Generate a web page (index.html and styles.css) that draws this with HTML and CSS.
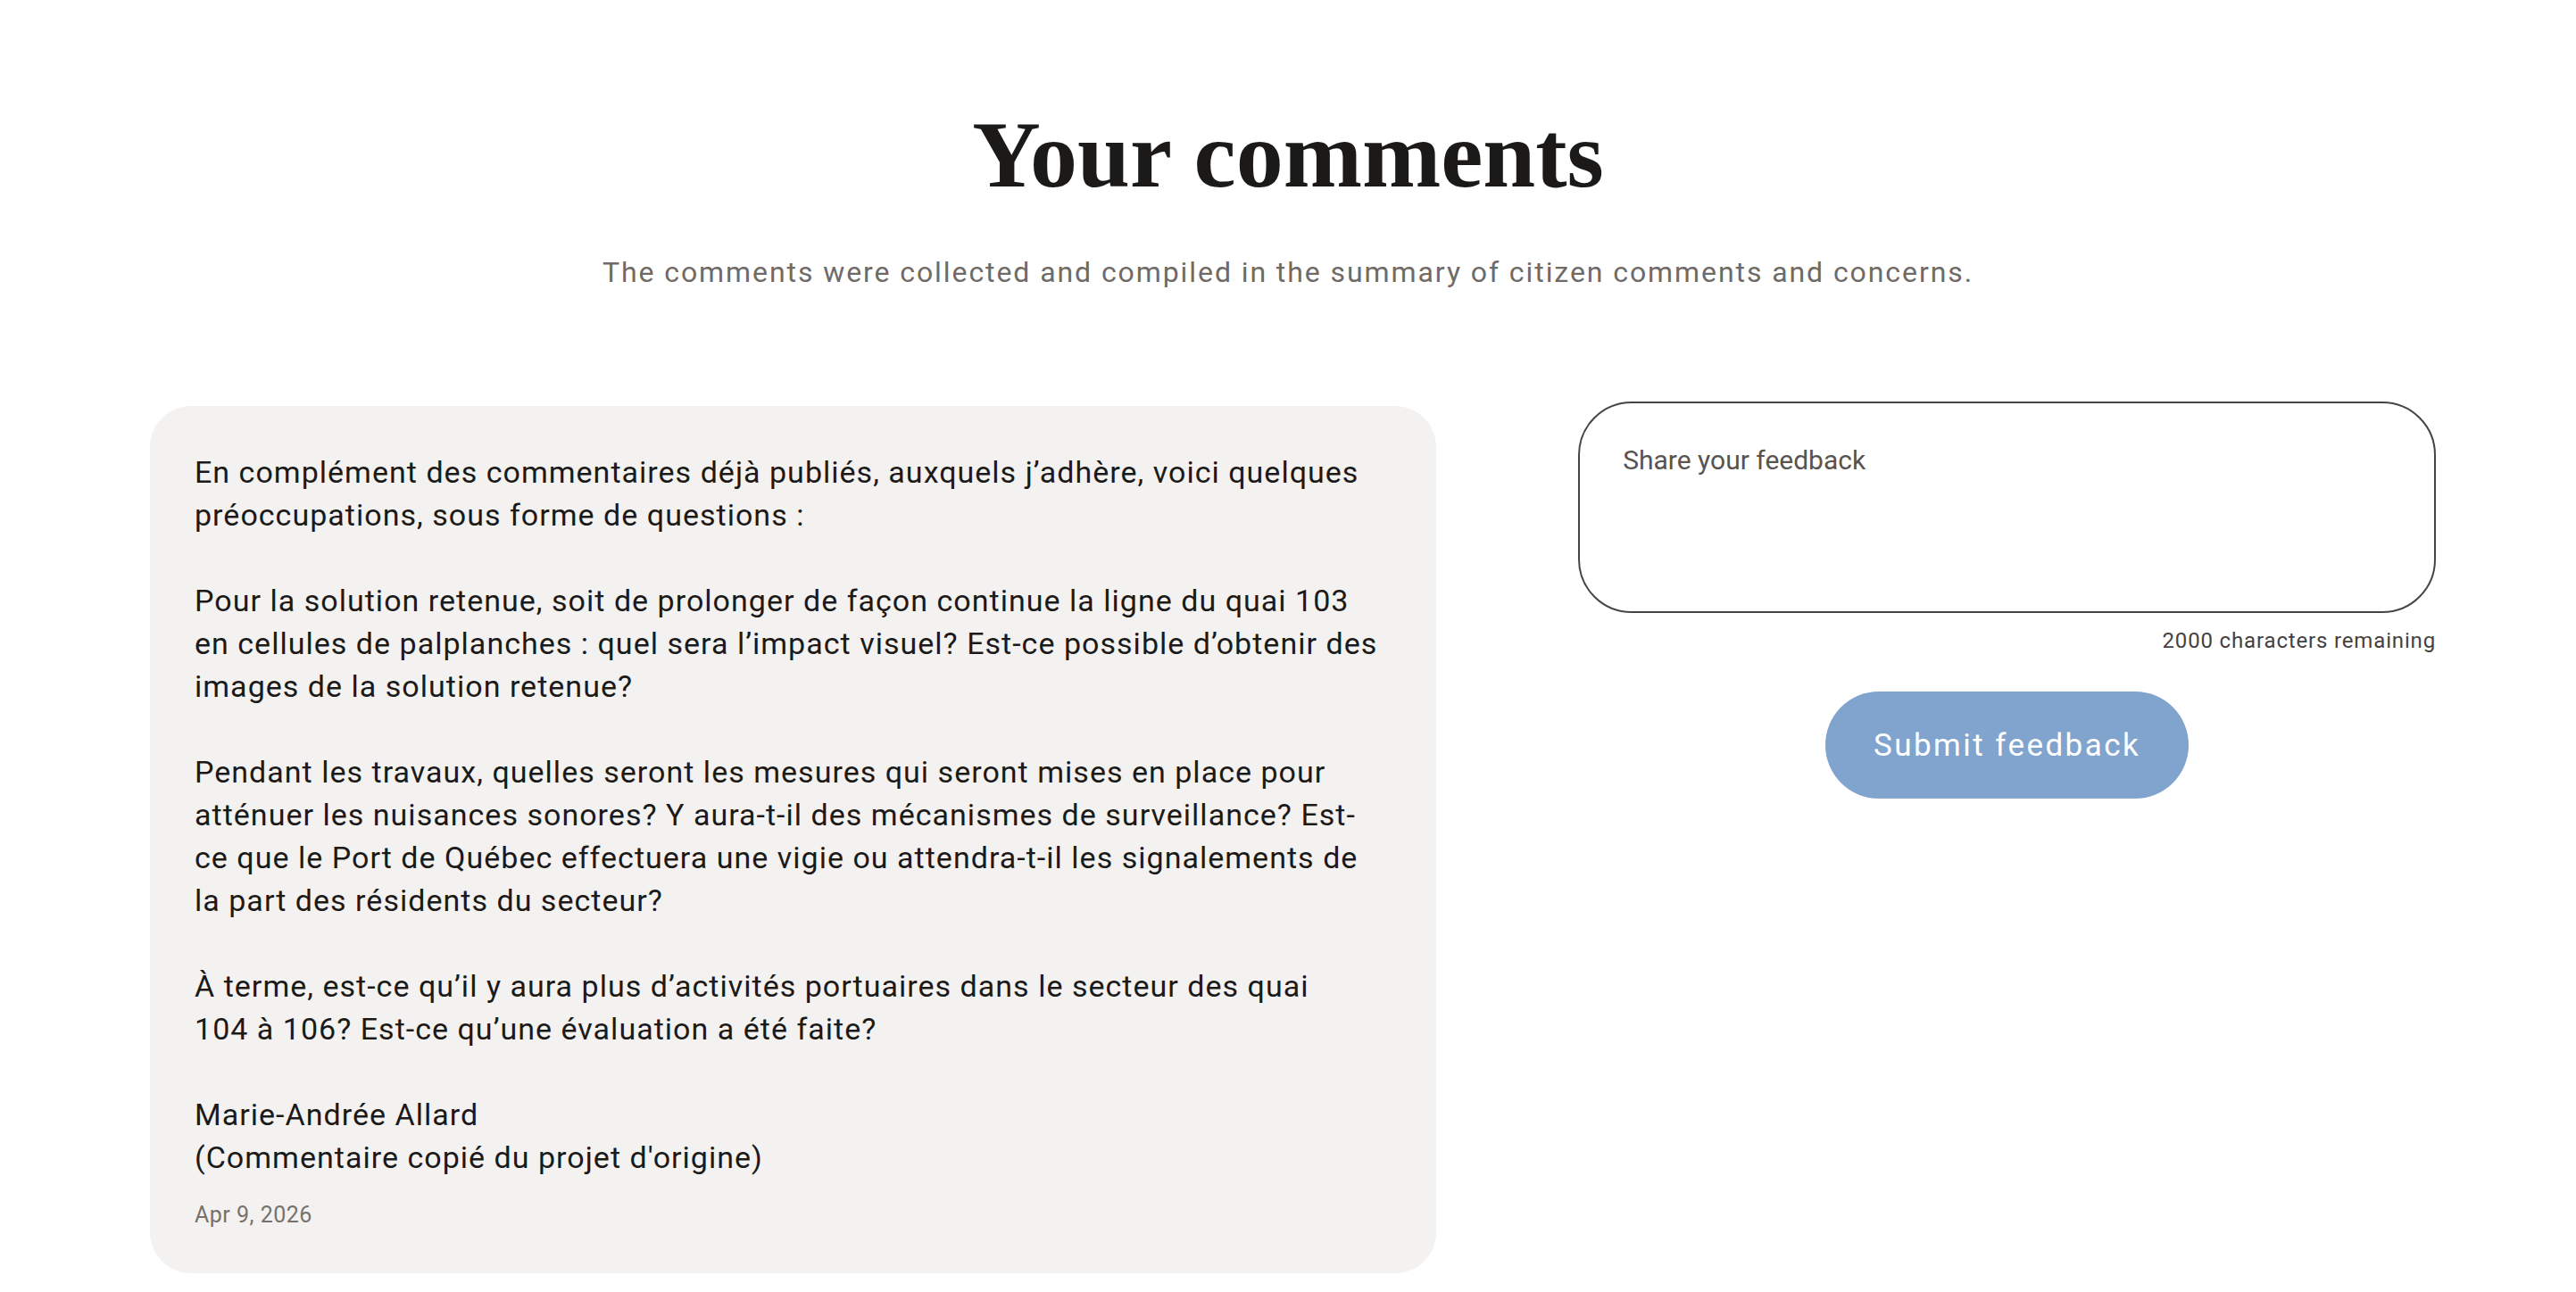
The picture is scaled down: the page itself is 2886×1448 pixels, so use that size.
FILE: index.html
```html
<!DOCTYPE html>
<html lang="fr">
<head>
    <meta charset="UTF-8">
    <meta name="viewport" content="width=device-width, initial-scale=1.0">
    <title>Your comments</title>
    <link rel="stylesheet" href="styles.css">
</head>
<body>
    <!-- En-tête de la section -->
    <header class="intro">
        <h1>Your comments</h1>
        <p class="intro-text">The comments were collected and compiled in the summary of citizen comments and concerns.</p>
    </header>

    <main class="comments">
        <!-- Commentaire publié -->
        <article class="comment-card">
            <p>En complément des commentaires déjà publiés, auxquels j’adhère, voici quelques<br>préoccupations, sous forme de questions :</p>
            <p>Pour la solution retenue, soit de prolonger de façon continue la ligne du quai 103<br>en cellules de palplanches : quel sera l’impact visuel? Est-ce possible d’obtenir des<br>images de la solution retenue?</p>
            <p>Pendant les travaux, quelles seront les mesures qui seront mises en place pour<br>atténuer les nuisances sonores? Y aura-t-il des mécanismes de surveillance? Est-<br>ce que le Port de Québec effectuera une vigie ou attendra-t-il les signalements de<br>la part des résidents du secteur?</p>
            <p>À terme, est-ce qu’il y aura plus d’activités portuaires dans le secteur des quai<br>104 à 106? Est-ce qu’une évaluation a été faite?</p>
            <p>Marie-Andrée Allard<br>(Commentaire copié du projet d'origine)</p>
            <span class="comment-date">Apr 9, 2026</span>
        </article>

        <!-- Formulaire de commentaire -->
        <form class="feedback-form">
            <textarea class="feedback-input" placeholder="Share your feedback" maxlength="2000" autofocus></textarea>
            <span class="feedback-count">2000 characters remaining</span>
            <button type="button" class="feedback-submit">Submit feedback</button>
        </form>
    </main>
</body>
</html>
```

FILE: styles.css
```css
/* Base */
body {
    margin: 0;
    background-color: #fff;
    color: #1c1a19;
    font-family: Roboto, "Liberation Sans", sans-serif;
}

/* En-tête */
.intro {
    text-align: center;
    padding-top: 118px;
}

.intro h1 {
    margin: 0;
    font-family: "Liberation Serif", serif;
    font-weight: 700;
    font-size: 106px;
    line-height: 112px;
    letter-spacing: 0;
    color: #1b1a18;
}

.intro-text {
    margin: 51px 0 0;
    font-size: 32px;
    line-height: 48px;
    letter-spacing: 0.06em;
    color: #6f6a66;
}

/* Deux colonnes : commentaires et formulaire */
.comments {
    display: grid;
    grid-template-columns: 3fr 2fr;
    column-gap: 159px;
    align-items: start;
    margin: 121px 157px 0 168px;
}

.comment-card {
    background-color: #f3f2f0;
    border-radius: 46px;
    padding: 50px 50px 47px;
    margin-top: 5px;
    font-size: 34px;
    line-height: 48px;
    letter-spacing: 0.03em;
}

.comment-card p {
    margin: 0 0 48px;
    white-space: nowrap;
}

.comment-card p:last-of-type {
    margin-bottom: 22px;
}

.comment-date {
    display: block;
    font-size: 25px;
    line-height: 37px;
    letter-spacing: 0.02em;
    color: #76716d;
}

/* Formulaire */
.feedback-form {
    display: flex;
    flex-direction: column;
    align-items: center;
}

.feedback-input {
    box-sizing: border-box;
    width: 100%;
    height: 237px;
    padding: 41px 48px;
    border: 2px solid #454545;
    border-radius: 60px;
    outline: none;
    resize: none;
    font-family: inherit;
    font-size: 30px;
    line-height: 45px;
    letter-spacing: 0;
    color: #1c1a19;
    caret-color: #1c1a19;
}

.feedback-input::placeholder {
    color: #58534f;
}

.feedback-count {
    align-self: flex-end;
    margin-top: 13px;
    font-size: 24px;
    line-height: 36px;
    letter-spacing: 0.035em;
    color: #45413e;
}

.feedback-submit {
    margin-top: 39px;
    height: 120px;
    padding: 0 54px;
    border: none;
    border-radius: 60px;
    background-color: #80a4cd;
    color: #fff;
    font-family: inherit;
    font-size: 35px;
    letter-spacing: 0.07em;
    cursor: pointer;
}
```
